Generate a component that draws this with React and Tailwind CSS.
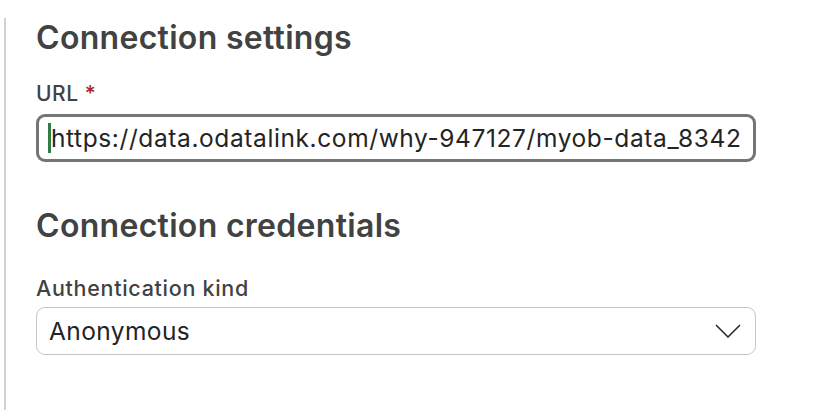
export default function App() {
  return (
    <div className="w-[818px] h-[410px] bg-white flex pt-[18px] pl-[4px] font-['Inter',sans-serif] text-[#242424]">
      <div className="w-[2px] self-stretch bg-[#d1d1d1]" />
      <div className="flex flex-col pl-[30px] w-[750px]">
        <h2 className="text-[32px] leading-[40px] font-semibold text-[#424242] tracking-[0.3px]">Connection settings</h2>

        <label className="mt-[22px] text-[21px] leading-[28px] font-medium text-[#424242] tracking-[0.5px]">
          URL <span className="text-[#a4262c]">*</span>
        </label>
        <div className="mt-[6px] h-[48px] border-[3px] border-[#757575] rounded-[9px] flex items-center pl-[9px]">
          <span className="w-[3px] h-[30px] bg-[#2e7d46]" />
          <span className="text-[24.5px] leading-[30px] text-[#242424] tracking-[0.6px]">https://data.odatalink.com/why-947127/myob-data_8342</span>
        </div>

        <h2 className="mt-[44px] text-[32px] leading-[40px] font-semibold text-[#424242] tracking-[0.3px]">Connection credentials</h2>

        <label className="mt-[28px] text-[21.5px] leading-[28px] font-medium text-[#424242] tracking-[0.7px]">Authentication kind</label>
        <div className="mt-[5px] h-[48px] border border-[#c7c7c7] rounded-[9px] flex items-center justify-between pl-[12px] pr-[14px]">
          <span className="text-[24.5px] leading-[30px] tracking-[0.4px]">Anonymous</span>
          <svg width="26" height="14" viewBox="0 0 26 14" fill="none">
            <path d="M1 1l12 12L25 1" stroke="#242424" strokeWidth="1.5" />
          </svg>
        </div>
      </div>
    </div>
  );
}
